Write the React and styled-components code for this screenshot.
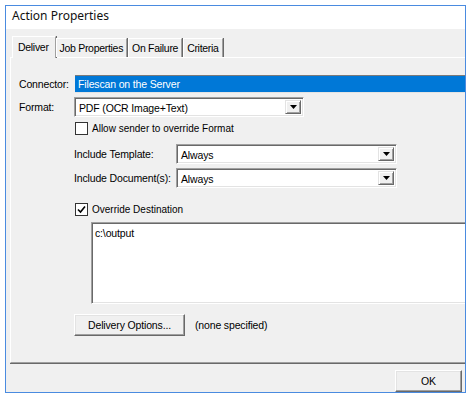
import React from "react";
import styled, { createGlobalStyle } from "styled-components";

const GlobalStyle = createGlobalStyle`
  body {
    margin: 0;
    background: #ffffff;
    font-family: "Liberation Sans", Arial, sans-serif;
    font-size: 10px;
    color: #000;
  }
`;

const Window = styled.div`
  margin: 5px 0 0 5px;
  width: 461px;
  height: 388px;
  box-sizing: border-box;
  border: 1px solid #4a8be0;
  background: #f0f0f0;
  display: flex;
  flex-direction: column;
  overflow: hidden;
`;

const TitleBar = styled.div`
  height: 23px;
  flex: none;
  background: #fff;
  padding: 2px 0 0 6px;
  box-sizing: border-box;
  font-family: "Noto Sans", "Liberation Sans", sans-serif;
  font-size: 12px;
  line-height: 16px;
  color: #111;
`;

const Body = styled.div`
  flex: 1;
  display: flex;
  flex-direction: column;
  padding: 7px 0 0 4px;
  min-height: 0;
`;

const TabStrip = styled.div`
  display: flex;
  align-items: flex-end;
  height: 21px;
  padding-left: 2px;
  flex: none;
  position: relative;
  z-index: 1;
`;

const Tab = styled.div`
  height: ${(p) => (p.$active ? "22px" : "19px")};
  box-sizing: border-box;
  padding: ${(p) => (p.$active ? "4px 6px 0 5px" : "3px 3px 0 3px")};
  margin: ${(p) => (p.$active ? "0 -1px -1px 0" : "0 0 0 1px")};
  background: #f0f0f0;
  border-top: 1px solid #fff;
  border-left: 1px solid #fff;
  border-right: 1px solid #a0a0a0;
  box-shadow: 1px 0 0 #696969;
  white-space: nowrap;
  font-size: 10.5px;
  letter-spacing: -0.3px;
`;

const Panel = styled.div`
  height: 306px;
  flex: none;
  border-top: 1px solid #fff;
  border-left: 1px solid #fff;
  border-bottom: 1px solid #a0a0a0;
  box-shadow: 0 1px 0 #696969;
  padding: 17px 0 0 8px;
  box-sizing: border-box;
  display: flex;
  flex-direction: column;
`;

const Row = styled.div`
  display: flex;
  align-items: center;
  margin-top: ${(p) => p.$top || 0}px;
  margin-left: ${(p) => p.$indent || 0}px;
  flex: none;
`;

const Label = styled.div`
  width: ${(p) => p.$w}px;
  flex: none;
  white-space: nowrap;
  font-size: 10.5px;
  letter-spacing: -0.15px;
`;

const SelectedField = styled.div`
  flex: 1;
  height: 18px;
  box-sizing: border-box;
  border-top: 1px solid #7a7a7a;
  border-bottom: 1px solid #e3e3e3;
  background: #0078d7;
  color: #fff;
  padding: 2px 0 0 3px;
  margin-right: -20px;
  font-size: 10.5px;
  letter-spacing: -0.15px;
`;

const Combo = styled.div`
  width: ${(p) => p.$w}px;
  height: 20px;
  box-sizing: border-box;
  background: #fff;
  border-top: 1px solid #a0a0a0;
  border-left: 1px solid #a0a0a0;
  border-bottom: 1px solid #fff;
  border-right: 1px solid #fff;
  box-shadow: inset 1px 1px 0 #696969, inset -1px -1px 0 #e3e3e3;
  display: flex;
  align-items: stretch;
  padding: 2px;
`;

const ComboText = styled.div`
  flex: 1;
  padding: 2px 0 0 2px;
  font-size: 10.5px;
  letter-spacing: -0.15px;
`;

const ComboButton = styled.div`
  width: 16px;
  flex: none;
  box-sizing: border-box;
  background: #f0f0f0;
  border-top: 1px solid #e3e3e3;
  border-left: 1px solid #e3e3e3;
  border-right: 1px solid #696969;
  border-bottom: 1px solid #696969;
  box-shadow: inset 1px 1px 0 #fff, inset -1px -1px 0 #a0a0a0;
  display: flex;
  align-items: center;
  justify-content: center;
`;

const Box = styled.div`
  width: 13px;
  height: 13px;
  box-sizing: border-box;
  border: 1px solid #333;
  background: #fff;
  display: flex;
  align-items: center;
  justify-content: center;
  margin-right: 4px;
  flex: none;
`;

const TextArea = styled.div`
  height: 82px;
  margin-left: 72px;
  margin-right: -20px;
  margin-top: 6px;
  flex: none;
  box-sizing: border-box;
  background: #fff;
  border-top: 1px solid #a0a0a0;
  border-left: 1px solid #a0a0a0;
  border-bottom: 1px solid #fff;
  box-shadow: inset 1px 1px 0 #696969, inset 0 -1px 0 #e3e3e3;
  padding: 4px 0 0 3px;
  font-size: 10.5px;
  letter-spacing: -0.15px;
`;

const Button = styled.div`
  width: ${(p) => p.$w}px;
  height: 22px;
  box-sizing: border-box;
  background: #f0f0f0;
  border-top: 1px solid #fff;
  border-left: 1px solid #fff;
  border-right: 1px solid #696969;
  border-bottom: 1px solid #696969;
  box-shadow: inset -1px -1px 0 #a0a0a0, inset 1px 1px 0 #e3e3e3;
  display: flex;
  align-items: center;
  justify-content: center;
  flex: none;
  font-size: 10.5px;
  letter-spacing: -0.15px;
`;

const Note = styled.div`
  margin-left: 10px;
  font-size: 10.5px;
  letter-spacing: -0.15px;
`;

const Footer = styled.div`
  flex: 1;
  display: flex;
  justify-content: flex-end;
  align-items: flex-start;
  padding: 7px 3px 0 0;
`;

const Arrow = () => (
  <svg width="7" height="4" viewBox="0 0 7 4">
    <path d="M0 0h7L3.5 4z" fill="#000" />
  </svg>
);

const Check = () => (
  <svg width="9" height="9" viewBox="0 0 9 9">
    <path d="M1 4.5l2.5 2.5L8 1.5" fill="none" stroke="#000" strokeWidth="1.6" />
  </svg>
);

const Dropdown = ({ w, value }) => (
  <Combo $w={w}>
    <ComboText>{value}</ComboText>
    <ComboButton>
      <Arrow />
    </ComboButton>
  </Combo>
);

const Checkbox = ({ checked, label }) => (
  <>
    <Box>{checked && <Check />}</Box>
    <span>{label}</span>
  </>
);

export default function App() {
  return (
    <>
      <GlobalStyle />
      <Window>
        <TitleBar>Action Properties</TitleBar>
        <Body>
          <TabStrip>
            <Tab $active>Deliver</Tab>
            <Tab>Job Properties</Tab>
            <Tab>On Failure</Tab>
            <Tab>Criteria</Tab>
          </TabStrip>
          <Panel>
            <Row>
              <Label $w={56}>Connector:</Label>
              <SelectedField>Filescan on the Server</SelectedField>
            </Row>
            <Row $top={4}>
              <Label $w={55}>Format:</Label>
              <Dropdown w={230} value="PDF (OCR Image+Text)" />
            </Row>
            <Row $top={5} $indent={56}>
              <Checkbox label="Allow sender to override Format" />
            </Row>
            <Row $top={9} $indent={55}>
              <Label $w={102}>Include Template:</Label>
              <Dropdown w={221} value="Always" />
            </Row>
            <Row $top={4} $indent={55}>
              <Label $w={102}>Include Document(s):</Label>
              <Dropdown w={221} value="Always" />
            </Row>
            <Row $top={15} $indent={56}>
              <Checkbox checked label="Override Destination" />
            </Row>
            <TextArea>c:\output</TextArea>
            <Row $top={10} $indent={55}>
              <Button $w={111}>Delivery Options...</Button>
              <Note>(none specified)</Note>
            </Row>
          </Panel>
          <Footer>
            <Button $w={67}>OK</Button>
          </Footer>
        </Body>
      </Window>
    </>
  );
}
